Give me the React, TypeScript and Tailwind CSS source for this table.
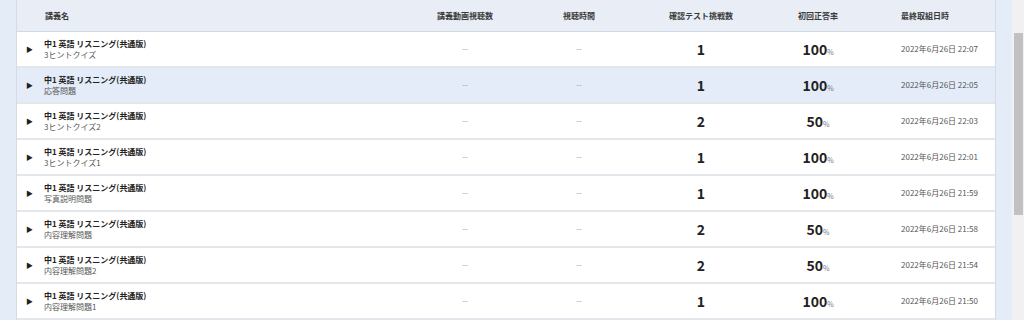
import React from "react";

type Row = { sub: string; tries: string; rate: string; date: string; hl?: boolean };

const rows: Row[] = [
  { sub: "3ヒントクイズ", tries: "1", rate: "100", date: "2022年6月26日 22:07" },
  { sub: "応答問題", tries: "1", rate: "100", date: "2022年6月26日 22:05", hl: true },
  { sub: "3ヒントクイズ2", tries: "2", rate: "50", date: "2022年6月26日 22:03" },
  { sub: "3ヒントクイズ1", tries: "1", rate: "100", date: "2022年6月26日 22:01" },
  { sub: "写真説明問題", tries: "1", rate: "100", date: "2022年6月26日 21:59" },
  { sub: "内容理解問題", tries: "2", rate: "50", date: "2022年6月26日 21:58" },
  { sub: "内容理解問題2", tries: "2", rate: "50", date: "2022年6月26日 21:54" },
  { sub: "内容理解問題1", tries: "1", rate: "100", date: "2022年6月26日 21:50" },
];

const font = { fontFamily: '"Noto Sans CJK JP", "Noto Sans", sans-serif' };

export default function App() {
  return (
    <div className="flex w-[1024px] h-[320px] overflow-hidden bg-[#e4ecf8]" style={font}>
      <div className="flex-1 pl-[16px] pr-[16px]">
        <div className="border-l border-r border-[#d6dbe3] bg-white">
          <div className="flex h-[32px] items-center bg-[#e9eef6] border-b border-[#d3d9e2] text-[8px] font-bold text-[#3a3a3a]">
            <div className="w-[391px] pl-[28px]">講義名</div>
            <div className="w-[114px] text-center">講義動画視聴数</div>
            <div className="w-[114px] text-center">視聴時間</div>
            <div className="w-[130px] text-center">確認テスト挑戦数</div>
            <div className="w-[104px] text-center">初回正答率</div>
            <div className="flex-1 pl-[31px]">最終取組日時</div>
          </div>
          {rows.map((r, i) => (
            <div
              key={i}
              className={`flex h-[36px] items-center border-b-2 border-[#e3e6eb] ${r.hl ? "bg-[#e3ecf8]" : "bg-white"}`}
            >
              <div className="w-[391px] flex items-center">
                <span className="w-[27px] pl-[9px] text-[7px] text-[#222] leading-none">▶</span>
                <div className="flex flex-col leading-[11px]">
                  <span className="text-[8px] font-bold text-[#222]">中1 英語 リスニング(共通版)</span>
                  <span className="text-[8px] text-[#555]">{r.sub}</span>
                </div>
              </div>
              <div className="w-[114px] text-center text-[8px] text-[#999]">--</div>
              <div className="w-[114px] text-center text-[8px] text-[#999]">--</div>
              <div className="w-[130px] text-center text-[14px] font-bold text-[#222] leading-none">{r.tries}</div>
              <div className="w-[104px] flex justify-center items-baseline leading-none text-[#222]">
                <span className="text-[14px] font-bold">{r.rate}</span>
                <span className="text-[7px] text-[#777]">%</span>
              </div>
              <div className="flex-1 pl-[31px] text-[8px] text-[#555]">{r.date}</div>
            </div>
          ))}
        </div>
      </div>
      <div className="w-[12px] bg-[#f1f1f1] pt-[33px] flex justify-center">
        <div className="w-[9px] h-[182px] bg-[#c1c1c1]" />
      </div>
    </div>
  );
}
